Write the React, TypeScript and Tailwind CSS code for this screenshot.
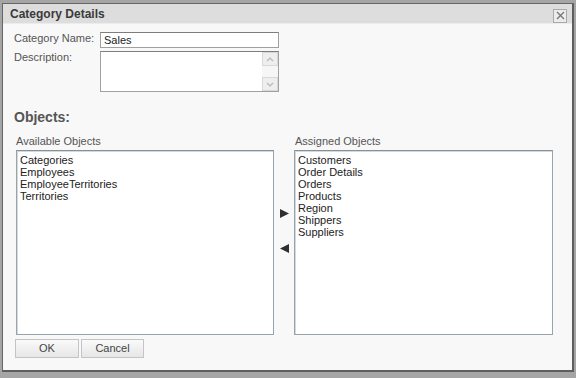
import React from "react";

const font = { fontFamily: '"Liberation Sans", Arial, sans-serif' };

function ListBox({ items }: { items: string[] }) {
  return (
    <div className="h-[185px] border border-[#98a4ac] border-t-[#84909a] bg-white shadow-[inset_1px_1px_0_#d3d9dd] px-[3px] pt-[3px]">
      {items.map((t) => (
        <div key={t} className="text-[11px] leading-[12px] text-[#222]">
          {t}
        </div>
      ))}
    </div>
  );
}

export default function App() {
  return (
    <div className="w-[576px] h-[378px] bg-[#a5a5a5] pt-[3px] pl-[2px]" style={font}>
      <div className="w-[572px] h-[369px] border border-[#666] border-r-2 border-b-2 border-r-[#5e5e5e] border-b-[#5e5e5e] bg-[#f8f8f8] flex flex-col">
        <div className="h-[20px] bg-[#dddddd] border-b border-[#ececec] flex items-center justify-between pl-[7px] pr-[5px]">
          <span className="text-[12px] font-bold text-[#3a3a3a]">Category Details</span>
          <div className="w-[14px] h-[14px] border border-[#a9a9a9] bg-[#ececec] flex items-center justify-center mt-[4px]">
            <svg width="9" height="9" viewBox="0 0 9 9">
              <path d="M1 1 L8 8 M8 1 L1 8" stroke="#777" strokeWidth="1.4" />
            </svg>
          </div>
        </div>
        <div className="pl-[11px] pt-[8px] flex flex-col">
          <div className="flex">
            <div className="w-[86px] text-[11px] leading-[13px] text-[#555] pt-[0px]">Category Name:</div>
            <div className="w-[179px] h-[16px] border border-[#a0a0a0] border-t-[#7e7e7e] bg-white text-[11px] leading-[14px] text-[#222] pl-[3px]">
              Sales
            </div>
          </div>
          <div className="flex mt-[3px]">
            <div className="w-[86px] text-[11px] leading-[13px] text-[#555]">Description:</div>
            <div className="w-[179px] h-[41px] border border-[#a0a0a0] border-t-[#7e7e7e] bg-white flex justify-end">
              <div className="w-[16px] h-full flex flex-col justify-between bg-[#f6f6f6]">
                <div className="h-[14px] border border-[#d8d8d8] bg-[#eeeeee] flex items-center justify-center">
                  <svg width="8" height="5" viewBox="0 0 8 5">
                    <path d="M1 4 L4 1 L7 4" stroke="#b5b5b5" strokeWidth="1.2" fill="none" />
                  </svg>
                </div>
                <div className="h-[14px] border border-[#d8d8d8] bg-[#eeeeee] flex items-center justify-center">
                  <svg width="8" height="5" viewBox="0 0 8 5">
                    <path d="M1 1 L4 4 L7 1" stroke="#b5b5b5" strokeWidth="1.2" fill="none" />
                  </svg>
                </div>
              </div>
            </div>
          </div>
          <div className="mt-[17px] text-[14px] leading-[16px] font-bold text-[#555]">Objects:</div>
          <div className="flex mt-[10px] pl-[2px]">
            <div className="w-[258px] flex flex-col">
              <div className="text-[11px] leading-[13px] text-[#555] h-[15px]">Available Objects</div>
              <ListBox items={["Categories", "Employees", "EmployeeTerritories", "Territories"]} />
            </div>
            <div className="w-[20px] flex flex-col pl-[6px] pt-[74px]">
              <svg width="9" height="9" viewBox="0 0 9 9">
                <path d="M0 0 L9 4.5 L0 9 Z" fill="#2f2f2f" />
              </svg>
              <svg width="9" height="9" viewBox="0 0 9 9" className="mt-[26px]">
                <path d="M9 0 L0 4.5 L9 9 Z" fill="#2f2f2f" />
              </svg>
            </div>
            <div className="w-[259px] flex flex-col">
              <div className="text-[11px] leading-[13px] text-[#555] h-[15px] pl-[1px]">Assigned Objects</div>
              <ListBox
                items={["Customers", "Order Details", "Orders", "Products", "Region", "Shippers", "Suppliers"]}
              />
            </div>
          </div>
          <div className="flex mt-[4px] pl-[1px] gap-[2px]">
            <button className="w-[64px] h-[19px] border border-[#c4c4c4] bg-gradient-to-b from-[#fafafa] to-[#e6e6e6] text-[11px] text-[#444]">
              OK
            </button>
            <button className="w-[63px] h-[19px] border border-[#c4c4c4] bg-gradient-to-b from-[#fafafa] to-[#e6e6e6] text-[11px] text-[#444]">
              Cancel
            </button>
          </div>
        </div>
      </div>
    </div>
  );
}
